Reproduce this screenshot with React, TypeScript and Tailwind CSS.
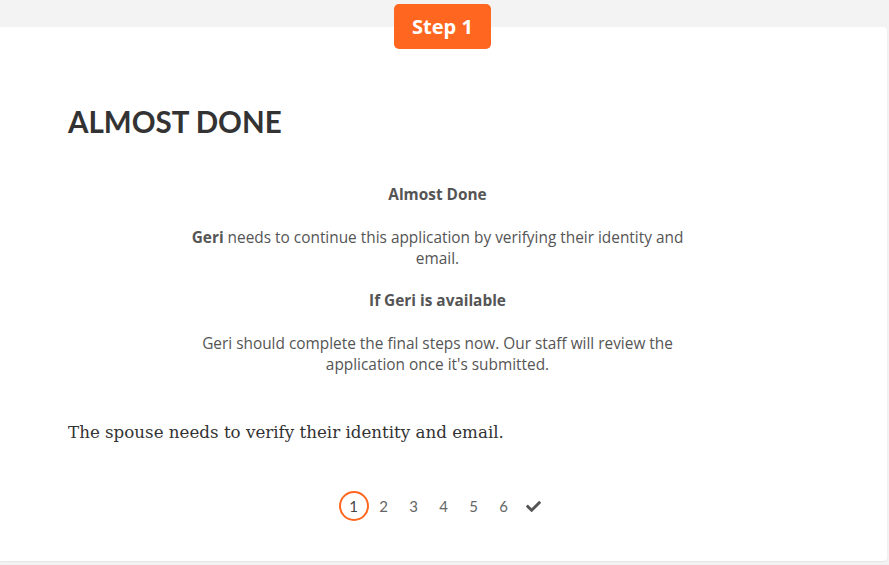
import { FaCheck } from "react-icons/fa";

const steps = [1, 2, 3, 4, 5, 6];

const App = () => {
  return (
    <div className="min-h-[565px] w-[889px] bg-[#f3f3f3] pt-[27px] pb-[4px]">
      <div className="relative h-[534px] w-[887px] rounded-r-[4px] bg-white shadow-[0_1px_2px_rgba(0,0,0,0.06)]">
        <div className="absolute left-[394px] top-[-23px] flex h-[45px] w-[97px] items-center justify-center rounded-[5px] bg-[#ff6720] font-['Open_Sans',sans-serif] text-[20px] font-bold text-white">
          Step 1
        </div>

        <div className="pl-[68px] pr-[80px] pt-[77px]">
          <h1 className="font-['Lato',sans-serif] text-[29.5px] leading-[35px] font-bold text-[#333]">
            ALMOST DONE
          </h1>

          <div className="mx-auto mt-[45px] max-w-[510px] text-center font-['Open_Sans',sans-serif] text-[15.4px] leading-[21px] text-[#555]">
            <p className="font-bold">Almost Done</p>
            <p className="mt-[22px]">
              <span className="font-bold">Geri</span> needs to continue this application by verifying their identity and email.
            </p>
            <p className="mt-[21px] font-bold">If Geri is available</p>
            <p className="mt-[22px]">
              Geri should complete the final steps now. Our staff will review the application once it's submitted.
            </p>
          </div>

          <p className="mt-[45px] font-['DejaVu_Serif',serif] text-[16.7px] leading-[24px] text-[#333]">
            The spouse needs to verify their identity and email.
          </p>
        </div>

        <div className="mt-[47px] flex items-center justify-center font-['Lato',sans-serif] text-[15px] text-[#666]">
          {steps.map((n) => (
            <div
              key={n}
              className={
                n === 1
                  ? "flex h-[30px] w-[30px] items-center justify-center rounded-full border-2 border-[#ff6720] text-[#444]"
                  : "flex h-[30px] w-[30px] items-center justify-center"
              }
            >
              {n}
            </div>
          ))}
          <div className="flex h-[30px] w-[30px] items-center justify-center text-[#555]">
            <FaCheck size={15} />
          </div>
        </div>
      </div>
    </div>
  );
};

export default App;
